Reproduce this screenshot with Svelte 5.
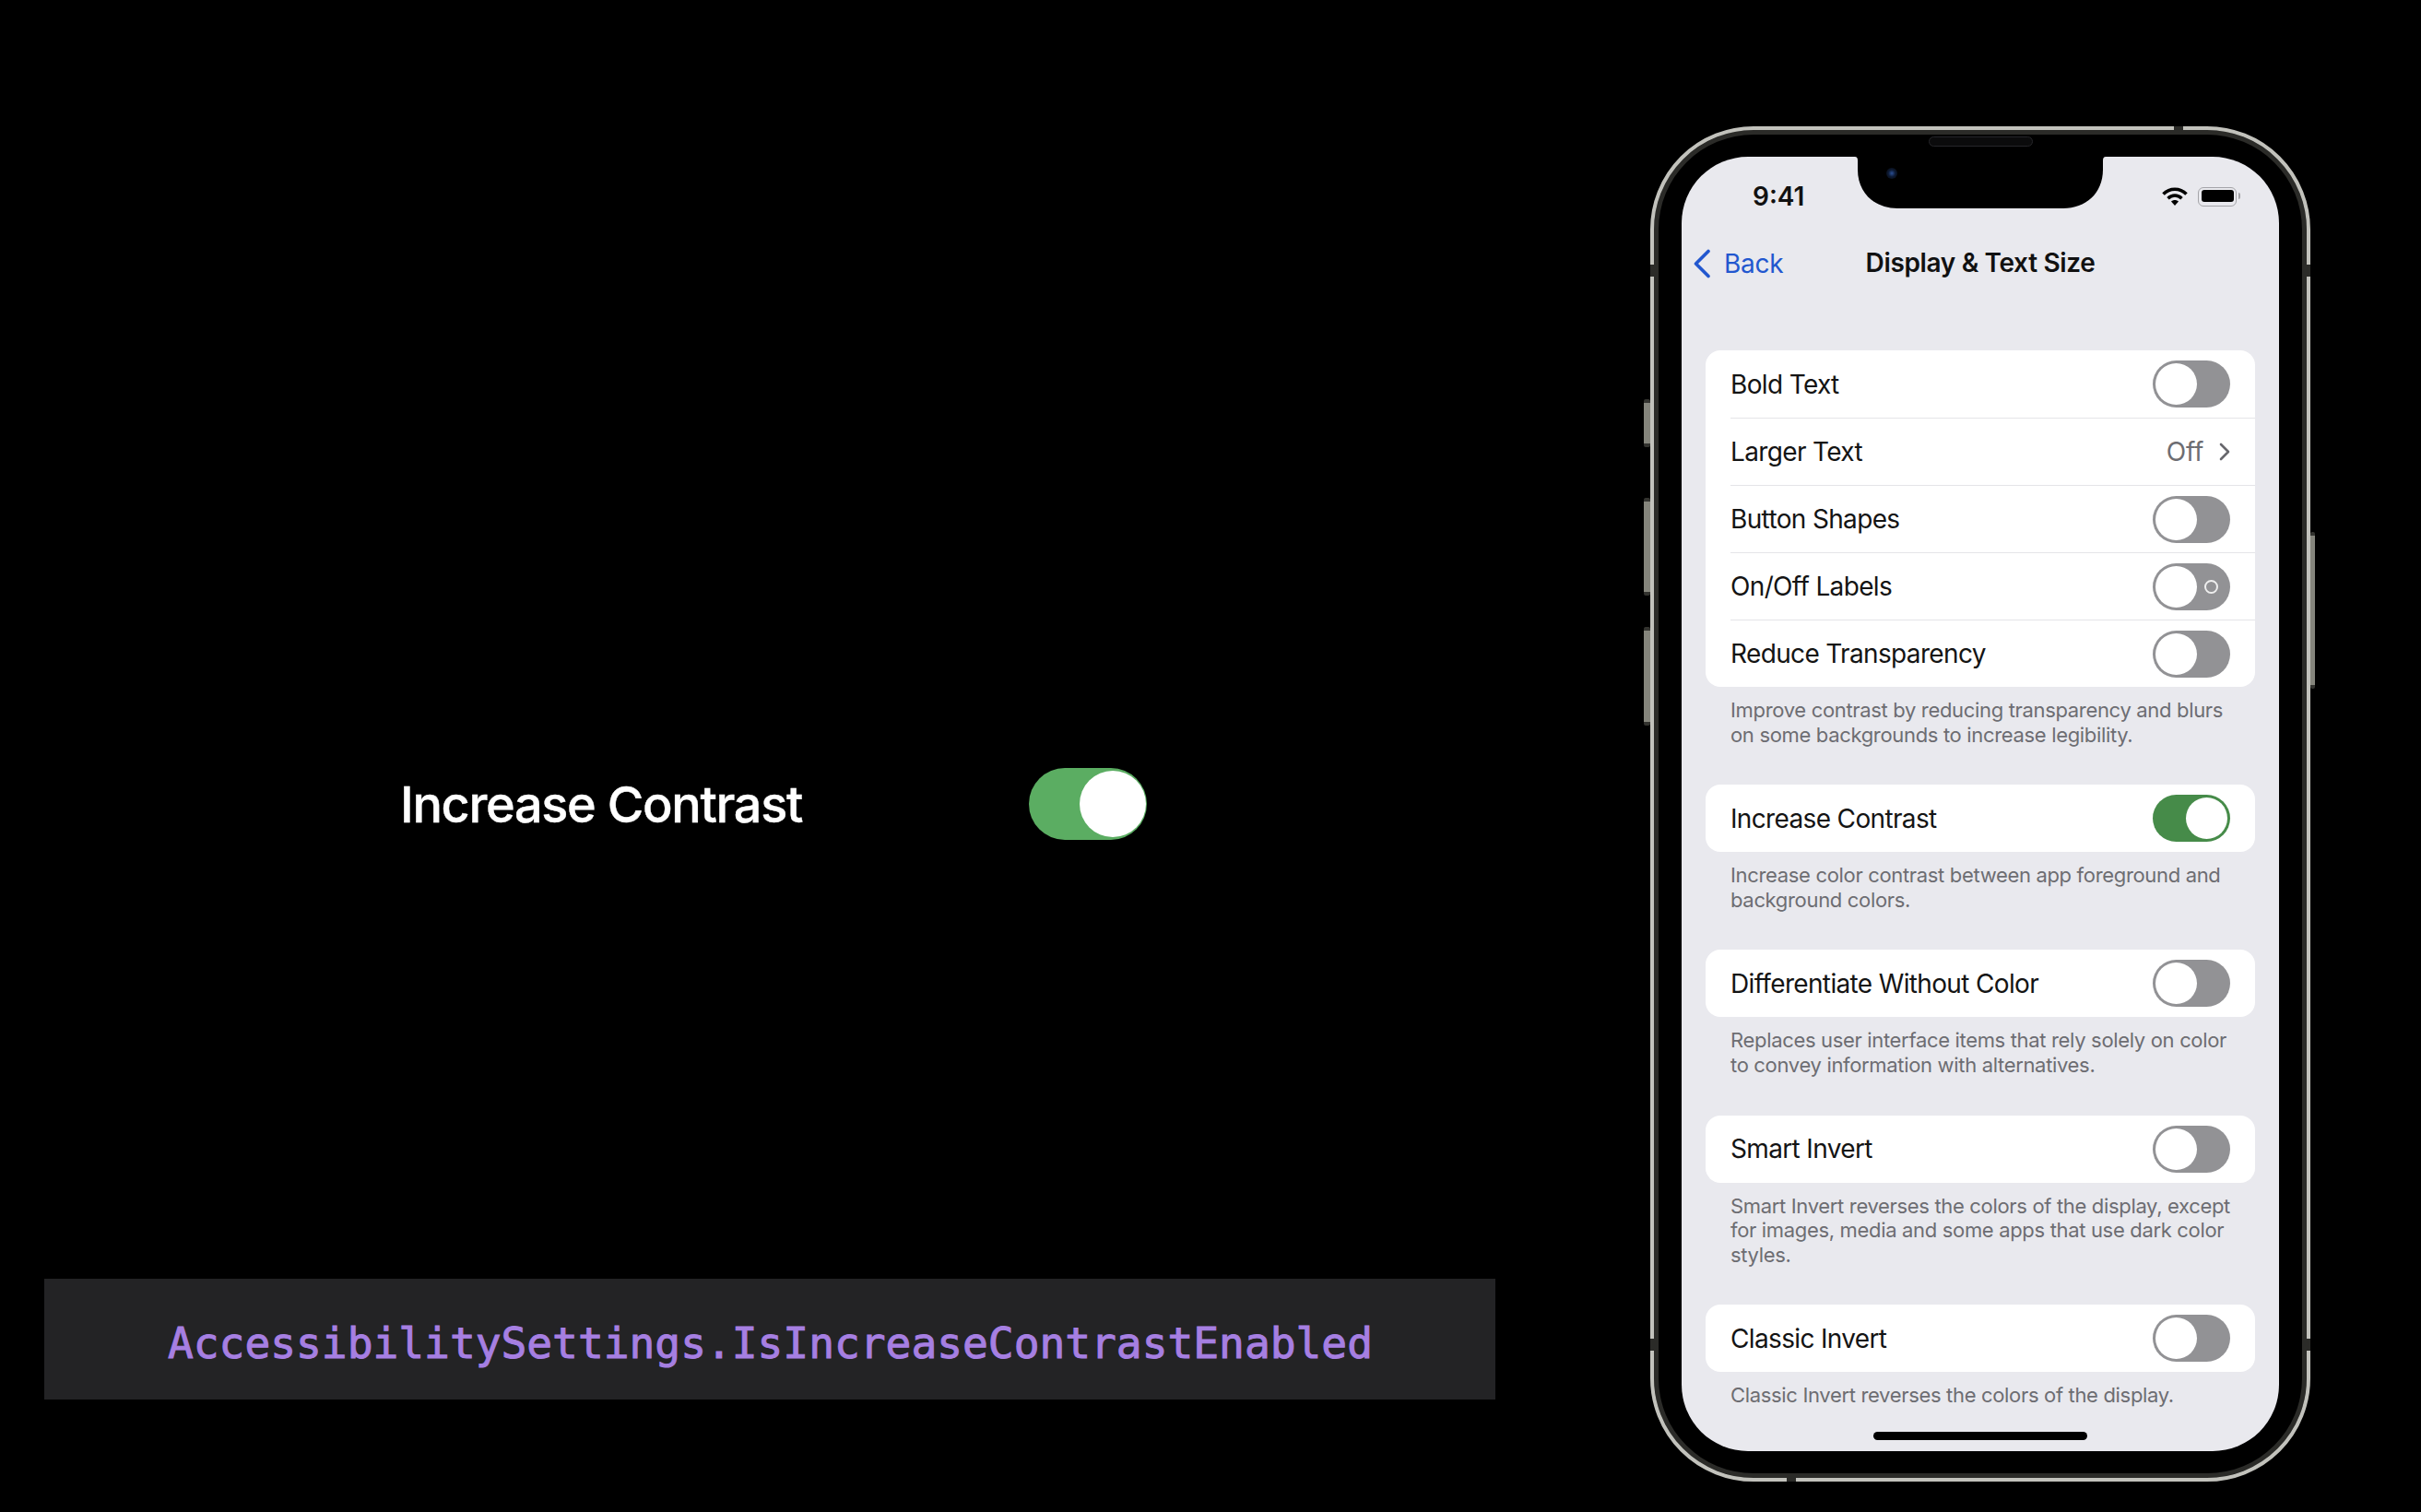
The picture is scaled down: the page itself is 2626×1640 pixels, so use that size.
<script lang="ts">
    interface Row {
        label: string;
        on?: boolean;
        marks?: boolean;
        value?: string;
    }

    interface Group {
        rows: Row[];
        note: string[];
    }

    const groups: Group[] = [
        {
            rows: [
                {label: "Bold Text"},
                {label: "Larger Text", value: "Off"},
                {label: "Button Shapes"},
                {label: "On/Off Labels", marks: true},
                {label: "Reduce Transparency"}
            ],
            note: ["Improve contrast by reducing transparency and blurs", "on some backgrounds to increase legibility."]
        },
        {
            rows: [{label: "Increase Contrast", on: true}],
            note: ["Increase color contrast between app foreground and", "background colors."]
        },
        {
            rows: [{label: "Differentiate Without Color"}],
            note: ["Replaces user interface items that rely solely on color", "to convey information with alternatives."]
        },
        {
            rows: [{label: "Smart Invert"}],
            note: ["Smart Invert reverses the colors of the display, except", "for images, media and some apps that use dark color", "styles."]
        },
        {
            rows: [{label: "Classic Invert"}],
            note: ["Classic Invert reverses the colors of the display."]
        }
    ];
</script>

<div class="page">
    <div class="stage">
        <div class="feature">
            <span class="feature-name">Increase Contrast</span>
            <span class="toggle big on"><span class="knob"></span></span>
        </div>
        <div class="code-bar">
            <code>AccessibilitySettings.IsIncreaseContrastEnabled</code>
        </div>
    </div>

    <div class="phone">
        <span class="side mute"></span>
        <span class="side vol-up"></span>
        <span class="side vol-down"></span>
        <span class="side power"></span>
        <span class="band band-tl"></span>
        <span class="band band-bl"></span>
        <span class="band band-tr"></span>
        <span class="band band-br"></span>
        <span class="band band-top"></span>
        <span class="band band-bottom"></span>
        <span class="speaker"></span>

        <div class="screen">
            <svg class="notch" width="272" height="57" viewBox="0 0 272 57">
                <path d="M0 0H272Q269 0 269 4V14C269 40 250 56 226 56H46C22 56 3 40 3 14V4Q3 0 0 0Z" fill="#000"/>
            </svg>
            <span class="camera"></span>

            <div class="status">
                <span class="time">9:41</span>
                <div class="status-icons">
                    <svg width="28" height="20" viewBox="0 0 28 20">
                        <path d="M1.5 7.5C8.5 0.5 19.5 0.5 26.5 7.5" fill="none" stroke="#000" stroke-width="3.6"/>
                        <path d="M6.5 12.2C11 8 17 8 21.5 12.2" fill="none" stroke="#000" stroke-width="3.6"/>
                        <path d="M10 15.6C12.4 13.6 15.6 13.6 18 15.6L14 20Z" fill="#000"/>
                    </svg>
                    <span class="battery"><span class="charge"></span></span>
                </div>
            </div>

            <div class="nav">
                <div class="back">
                    <svg width="20" height="32" viewBox="0 0 20 32">
                        <path d="M17 2.5L3.5 16L17 29.5" fill="none" stroke="#2257cf" stroke-width="3.6" stroke-linecap="round" stroke-linejoin="round"/>
                    </svg>
                    <span>Back</span>
                </div>
                <span class="title">Display &amp; Text Size</span>
            </div>

            <div class="list">
                {#each groups as group}
                    <div class="card">
                        {#each group.rows as row}
                            <div class="row">
                                <span class="label">{row.label}</span>
                                {#if row.value}
                                    <span class="value">{row.value}</span>
                                    <svg class="more" width="14" height="20" viewBox="0 0 14 20">
                                        <path d="M3 2L11 10L3 18" fill="none" stroke="#67676c" stroke-width="2.6" stroke-linecap="round" stroke-linejoin="round"/>
                                    </svg>
                                {:else}
                                    <span class="toggle" class:on={row.on}>
                                        <span class="knob"></span>
                                        {#if row.marks}<span class="ring"></span>{/if}
                                    </span>
                                {/if}
                            </div>
                        {/each}
                    </div>
                    <p class="note">
                        {#each group.note as line}<span>{line}</span>{/each}
                    </p>
                {/each}
            </div>

            <span class="home"></span>
        </div>
    </div>
</div>

<style>
    :global(body) {
        margin: 0;
        background: #000;
    }

    .page {
        display: flex;
        width: 2626px;
        height: 1640px;
        overflow: hidden;
        background: #000;
        font-family: Inter, "Liberation Sans", sans-serif;
    }

    .stage {
        width: 1790px;
        padding-top: 833px;
        box-sizing: border-box;
    }

    .feature {
        display: flex;
        align-items: center;
        justify-content: space-between;
        width: 810px;
        margin-left: 434px;
    }

    .feature-name {
        color: #fff;
        font-size: 54px;
        font-weight: 500;
        letter-spacing: -1.3px;
        -webkit-text-stroke: 0.4px #fff;
    }

    .code-bar {
        display: flex;
        align-items: center;
        box-sizing: border-box;
        width: 1574px;
        height: 131px;
        margin: 476px 0 0 48px;
        padding: 9px 0 0 134px;
        background: #232325;
    }

    code {
        color: #a67fe2;
        font-family: "DejaVu Sans Mono", monospace;
        font-size: 46.2px;
        -webkit-text-stroke: 1px #a67fe2;
    }

    .toggle {
        position: relative;
        display: block;
        flex: none;
        width: 84px;
        height: 51px;
        border-radius: 26px;
        background: #929295;
    }

    .toggle.on {
        background: #468b49;
    }

    .knob {
        position: absolute;
        top: 3px;
        left: 3px;
        width: 45px;
        height: 45px;
        border-radius: 50%;
        background: #fff;
    }

    .on .knob {
        left: 36px;
    }

    .ring {
        position: absolute;
        top: 18px;
        right: 13px;
        box-sizing: border-box;
        width: 15px;
        height: 15px;
        border: 2px solid #eee;
        border-radius: 50%;
    }

    .toggle.big {
        width: 128px;
        height: 78px;
        border-radius: 39px;
        background: #5bad62;
    }

    .big .knob {
        top: 3px;
        left: 55px;
        width: 72px;
        height: 72px;
    }

    .phone {
        position: relative;
        box-sizing: border-box;
        width: 716px;
        height: 1470px;
        margin-top: 137px;
        padding: 29px 30px;
        border: 4px solid #c2c2bc;
        border-radius: 112px;
        background: #000;
        box-shadow: inset 0 0 0 5px #2b2b28;
    }

    .side {
        position: absolute;
        box-sizing: border-box;
        width: 7px;
        border-radius: 2px;
        border-block: 4px solid #33332f;
        background: #85857c;
    }

    .mute {
        top: 292px;
        left: -11px;
        height: 52px;
    }

    .vol-up {
        top: 399px;
        left: -11px;
        height: 106px;
    }

    .vol-down {
        top: 539px;
        left: -11px;
        height: 107px;
    }

    .power {
        top: 436px;
        right: -9px;
        width: 5px;
        height: 170px;
    }

    .band {
        position: absolute;
        background: #2b2b28;
    }

    .band-tl,
    .band-bl,
    .band-tr,
    .band-br {
        width: 4px;
        height: 13px;
    }

    .band-top,
    .band-bottom {
        width: 10px;
        height: 4px;
    }

    .band-tl {
        top: 146px;
        left: -4px;
    }

    .band-tr {
        top: 146px;
        right: -4px;
    }

    .band-bl {
        top: 1311px;
        left: -4px;
    }

    .band-br {
        top: 1311px;
        right: -4px;
    }

    .band-top {
        top: -4px;
        left: 564px;
    }

    .band-bottom {
        bottom: -4px;
        left: 144px;
    }

    .speaker {
        position: absolute;
        top: 7px;
        left: 298px;
        width: 113px;
        height: 11px;
        box-sizing: border-box;
        border: 1px solid #26262a;
        border-radius: 6px;
        background: #0b0b0c;
    }

    .screen {
        position: relative;
        display: flex;
        flex-direction: column;
        width: 648px;
        height: 1404px;
        overflow: hidden;
        border-radius: 72px;
        background: #e9e9ee;
    }

    .notch {
        position: absolute;
        top: 0;
        left: 188px;
    }

    .camera {
        position: absolute;
        top: 12px;
        left: 222px;
        width: 12px;
        height: 12px;
        border-radius: 50%;
        background: radial-gradient(#2a4f96 0, #0d1a33 45%, #050608 100%);
    }

    .status {
        display: flex;
        align-items: center;
        justify-content: space-between;
        flex: none;
        box-sizing: border-box;
        height: 86px;
        padding: 0 46px 0 77px;
    }

    .time {
        color: #111;
        font-size: 28px;
        font-weight: 600;
    }

    .status-icons {
        display: flex;
        align-items: center;
        gap: 11px;
    }

    .battery {
        position: relative;
        box-sizing: border-box;
        width: 42px;
        height: 21px;
        padding: 2.5px;
        border: 1.5px solid #a4a4a8;
        border-radius: 6px;
    }

    .battery::after {
        content: "";
        position: absolute;
        top: 5px;
        right: -5px;
        width: 2px;
        height: 7px;
        border-radius: 0 2px 2px 0;
        background: #a4a4a8;
    }

    .charge {
        display: block;
        height: 13px;
        border-radius: 3px;
        background: #000;
    }

    .nav {
        position: relative;
        display: flex;
        align-items: center;
        justify-content: center;
        flex: none;
        height: 58px;
    }

    .back {
        position: absolute;
        top: 13px;
        left: 12px;
        display: flex;
        align-items: center;
        gap: 14px;
        color: #2257cf;
        font-size: 28px;
        letter-spacing: -0.3px;
    }

    .title {
        color: #111;
        font-size: 28px;
        font-weight: 600;
        letter-spacing: -0.35px;
    }

    .list {
        margin-top: 66px;
        padding: 0 26px;
    }

    .card {
        border-radius: 16px;
        background: #fff;
        overflow: hidden;
    }

    .row {
        display: flex;
        align-items: center;
        box-sizing: border-box;
        height: 73px;
        margin-left: 27px;
        padding-right: 27px;
        border-top: 1.5px solid #e4e4e8;
    }

    .row:first-child {
        border-top: 0;
    }

    .label {
        flex: 1;
        color: #141414;
        font-size: 28px;
        letter-spacing: -0.65px;
    }

    .value {
        color: #6d6d72;
        font-size: 28px;
        letter-spacing: -0.3px;
    }

    .more {
        margin: 0 -1px 0 16px;
    }

    .note {
        display: flex;
        flex-direction: column;
        margin: 0 0 41px;
        padding: 12px 27px 0;
        color: #6d6d72;
        font-size: 22px;
        line-height: 26.6px;
        letter-spacing: -0.33px;
        white-space: nowrap;
    }

    .home {
        position: absolute;
        bottom: 12px;
        left: 208px;
        width: 232px;
        height: 9px;
        border-radius: 5px;
        background: #000;
    }
</style>
